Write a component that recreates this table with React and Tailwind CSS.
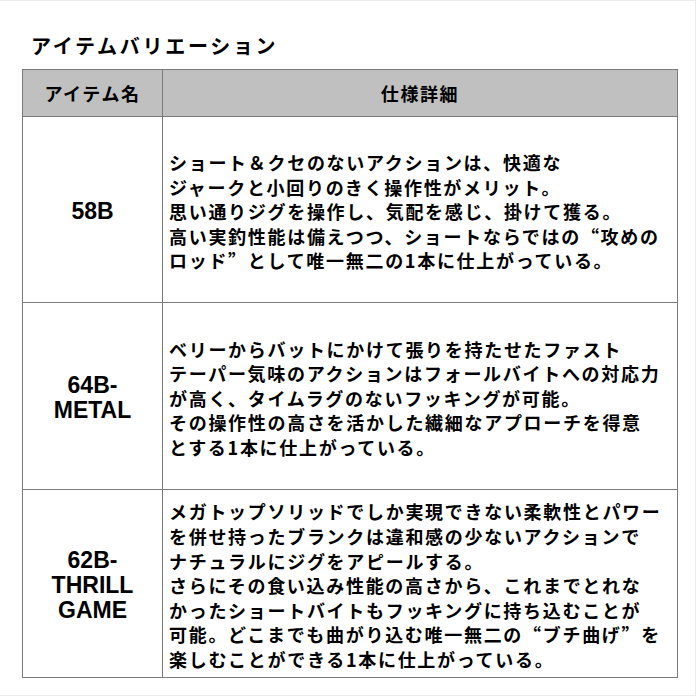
const Q = ({ children }) => (
  <span className="[font-feature-settings:'fwid']">{children}</span>
);

const rows = [
  {
    name: ["58B"],
    text: [
      "ショート＆クセのないアクションは、快適な",
      "ジャークと小回りのきく操作性がメリット。",
      "思い通りジグを操作し、気配を感じ、掛けて獲る。",
      <>高い実釣性能は備えつつ、ショートならではの<Q>“</Q>攻めの</>,
      <>ロッド<Q>”</Q>として唯一無二の1本に仕上がっている。</>,
    ],
    h: "h-[186px]",
  },
  {
    name: ["64B-", "METAL"],
    text: [
      "ベリーからバットにかけて張りを持たせたファスト",
      "テーパー気味のアクションはフォールバイトへの対応力",
      "が高く、タイムラグのないフッキングが可能。",
      "その操作性の高さを活かした繊細なアプローチを得意",
      "とする1本に仕上がっている。",
    ],
    h: "h-[187px]",
  },
  {
    name: ["62B-", "THRILL", "GAME"],
    text: [
      "メガトップソリッドでしか実現できない柔軟性とパワー",
      "を併せ持ったブランクは違和感の少ないアクションで",
      "ナチュラルにジグをアピールする。",
      "さらにその食い込み性能の高さから、これまでとれな",
      "かったショートバイトもフッキングに持ち込むことが",
      <>可能。どこまでも曲がり込む唯一無二の<Q>“</Q>ブチ曲げ<Q>”</Q>を</>,
      "楽しむことができる1本に仕上がっている。",
    ],
    h: "h-[187px]",
  },
];

const jp = "font-['Noto_Sans_CJK_JP','Noto_Sans',sans-serif]";

export default function App() {
  return (
    <div lang="ja" className={`w-[696px] h-[696px] bg-white border border-[#ececec] border-l-0 ${jp} text-black`}>
      <h1 className="pl-[31px] pt-[31px] h-[68px] text-[20px] font-bold tracking-[2.7px] leading-[28px]">
        アイテムバリエーション
      </h1>
      <div className="ml-[22px] w-[656px] border-[1.5px] border-[#7a7a7a]">
        <div className="flex h-[47px] bg-[#c0c0c0] border-b-[1.5px] border-[#7a7a7a]">
          <div className="w-[140px] shrink-0 flex items-center justify-center border-r-[1.5px] border-[#7a7a7a] text-[18px] font-bold tracking-[1.6px]">
            アイテム名
          </div>
          <div className="flex-1 flex items-center justify-center text-[18px] font-bold tracking-[1.6px]">
            仕様詳細
          </div>
        </div>
        {rows.map((r, i) => (
          <div
            key={i}
            className={`flex ${r.h} ${i < rows.length - 1 ? "border-b-[1.5px] border-[#7a7a7a]" : ""}`}
          >
            <div className="w-[140px] shrink-0 flex flex-col items-center justify-center pt-[4px] border-r-[1.5px] border-[#7a7a7a] font-['Liberation_Sans',Arial,sans-serif] text-[23px] font-bold leading-[25px]">
              {r.name.map((n) => (
                <span key={n}>{n}</span>
              ))}
            </div>
            <div className="flex-1 flex flex-col justify-center pt-[4px] pl-[6px] text-[18px] font-bold leading-[24.6px] tracking-[1.7px] whitespace-nowrap">
              {r.text.map((t, j) => (
                <span key={j}>{t}</span>
              ))}
            </div>
          </div>
        ))}
      </div>
    </div>
  );
}
